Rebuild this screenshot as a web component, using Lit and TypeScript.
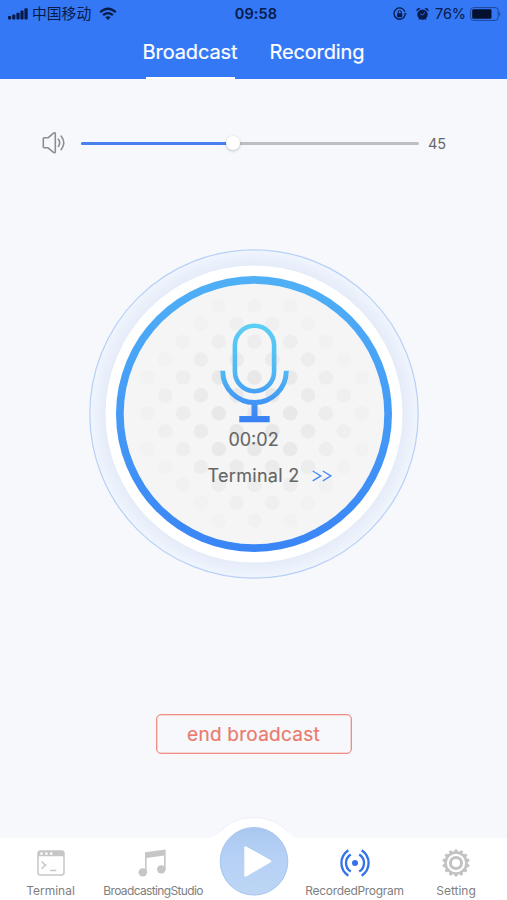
import { LitElement, html, css, svg } from "lit";
import { customElement, property } from "lit/decorators.js";

const signal = html`<svg width="20" height="12" viewBox="0 0 20 12" fill="#071a4a">
  <rect x="0" y="8" width="3.2" height="3.6" rx="1" /><rect x="4.2" y="6.4" width="3.2" height="5.2" rx="1" />
  <rect x="8.4" y="4.8" width="3.2" height="6.8" rx="1" /><rect x="12.4" y="2.6" width="3.2" height="9" rx="1" />
  <rect x="16.4" y="0.3" width="3.3" height="11.3" rx="1" /></svg>`;

const wifi = html`<svg width="18" height="14" viewBox="0 0 18 14" fill="none" stroke="#071a4a" stroke-width="2.3">
  <path d="M1.2 5.2Q9-1.8 16.8 5.2" /><path d="M4.1 8.2Q9 4 13.9 8.2" />
  <path d="M6.3 10.2Q9 8.1 11.7 10.2L9 12.9Z" fill="#071a4a" stroke="none" /></svg>`;

const rotationLock = html`<svg width="14" height="14" viewBox="0 0 14 14" fill="none" stroke="#071a4a">
  <path d="M12.1 7.8A5.6 5.6 0 1 1 11.9 4.7" stroke-width="1.3" /><path d="M10.7 6.2h3.2l-1.6 2.3z" fill="#071a4a" stroke="none" />
  <rect x="4.1" y="6.2" width="5.2" height="4" rx=".6" fill="#071a4a" stroke="none" />
  <path d="M5.2 6.5V5a1.5 1.5 0 0 1 3 0v1.5" stroke-width="1" /></svg>`;

const alarm = html`<svg width="13" height="14" viewBox="0 0 13 14">
  <g fill="#071a4a"><circle cx="6.5" cy="7.6" r="5.2" /><path d="M.6 4.4A2.6 2.6 0 0 1 4.5 1.4ZM12.4 4.4A2.6 2.6 0 0 0 8.5 1.4Z" /><path d="M2.2 13.2l1.6-2.6 1 1zM10.8 13.2l-1.6-2.6-1 1z" /></g>
  <path d="M6.8 8L9 5M6.8 8L4.2 7.1" stroke="#3478f6" stroke-width=".8" fill="none" /></svg>`;

const battery = html`<svg width="32" height="14" viewBox="0 0 32 14">
  <rect x=".6" y=".6" width="27.6" height="12.8" rx="3" fill="none" stroke="#1d4699" stroke-width="1" />
  <rect x="2.2" y="2.2" width="19.3" height="9.6" rx="1.4" fill="#04102f" /><path d="M29.3 4.7q2.4 2.3 0 4.6z" fill="#1d4699" /></svg>`;

const speaker = html`<svg width="24" height="24" viewBox="0 0 24 24" fill="none" stroke="#8b8d90" stroke-width="1.6" stroke-linejoin="round" stroke-linecap="round">
  <path d="M2.3 6.8H6L11.5 2.1Q13.3 1 13.3 3V20.6Q13.3 22.6 11.5 21.3L6 16.8H2.3Q1.3 16.8 1.3 15.8V7.8Q1.3 6.8 2.3 6.8Z" />
  <path d="M16.4 8.2Q19 11.7 16.4 15.4M19.2 5.2Q24.4 11.7 19.2 18.6" /></svg>`;

const microphone = html`<svg width="70" height="102" viewBox="0 0 70 102" fill="none">
  <defs><linearGradient id="tone" gradientUnits="userSpaceOnUse" x1="0" y1="0" x2="0" y2="100">
    <stop offset="0" stop-color="#5dd0f4" /><stop offset=".5" stop-color="#50b8f4" /><stop offset="1" stop-color="#397ff5" />
  </linearGradient></defs>
  <g stroke="url(#tone)"><rect x="14.9" y="3.8" width="39.2" height="65.4" rx="19.6" stroke-width="4.6" />
  <path d="M2.7 48.7A31.8 31.8 0 0 0 66.3 48.7" stroke-width="4.9" /></g>
  <path d="M31.5 80h6v14h12.2v6.2H19.3v-6.2h12.2z" fill="url(#tone)" /></svg>`;

const chevrons = html`<svg width="20" height="12" viewBox="0 0 20 12" fill="none" stroke="#4d8cf3" stroke-width="1.4">
  <path d="M.7 1L8.8 5.9.7 10.8M10.8 1l8.1 4.9-8.1 4.9" /></svg>`;

const terminalIcon = html`<svg width="28" height="26" viewBox="0 0 28 26" fill="none" stroke="#c6c6c6">
  <rect x="1" y="1" width="26" height="24" rx="2.4" stroke-width="1.5" />
  <path d="M1 3.2Q1 1 3.2 1H24.8Q27 1 27 3.2V6.3H1Z" fill="#c6c6c6" stroke="none" />
  <path d="M3.3 2.4h2.4v2.4h-2.4zM8.2 2.4h2.4v2.4H8.2zM13 2.4h2.4v2.4H13z" fill="#fff" stroke="none" />
  <path d="M4.8 11.3Q6.5 14.2 8.7 15.1Q6.5 16 4.8 18.9M13 20.6h6.3" stroke-width="1.5" /></svg>`;

const musicIcon = html`<svg width="28" height="28" viewBox="0 0 28 28" fill="#c6c6c6">
  <path d="M7 3.2L27.6.6V20.4H26V6.6L8.6 9V23H7Z" />
  <ellipse cx="4.8" cy="23.3" rx="4.3" ry="4.1" /><ellipse cx="23.3" cy="20.3" rx="4.3" ry="4.1" /></svg>`;

const broadcastIcon = html`<svg width="30" height="28" viewBox="0 0 30 28" fill="none" stroke="#3472e8" stroke-width="2.3">
  <circle cx="15" cy="14" r="3" fill="#3472e8" stroke="none" />
  <path d="M8.3 1.3Q1.4 6.2 1.4 14T8.3 26.7M21.7 1.3Q28.6 6.2 28.6 14T21.7 26.7M10.8 5.4Q6 8.4 6 14T10.8 22.6M19.2 5.4Q24 8.4 24 14T19.2 22.6" /></svg>`;

const gearIcon = html`<svg width="28" height="28" viewBox="0 0 28 28" fill="none" stroke="#c2c2c2">
  <circle cx="14" cy="14" r="10.5" stroke-width="2.6" /><circle cx="14" cy="14" r="5.6" stroke-width="3" />
  ${Array.from({ length: 14 }, (_, i) => svg`<path d="M12.2 3L12.7 .4h2.6l.5 2.6z" fill="#c2c2c2" stroke="none" transform="rotate(${(i * 360) / 14} 14 14)" />`)}</svg>`;

@customElement("status-bar")
class StatusBar extends LitElement {
  static styles = css`
    :host { display: grid; grid-template-columns: 1fr auto 1fr; height: 28px; align-items: center; color: #071a4a; padding: 0 5px 0 8px; font-size: 14.5px; }
    .side { display: flex; align-items: center; }
    .carrier { margin: -1px 8px 0 4px; font-size: 14.8px; line-height: 22px; }
    .time { font-weight: 600; font-size: 14.5px; letter-spacing: 0.1px; margin: -1px -2px 0 0; }
    .right { justify-content: flex-end; }
    .alarm { margin: 0 7px 0 9px; display: flex; }
    .percent { width: 31px; margin: -1px 4px 0 -1px; letter-spacing: -0.1px; }
    svg { display: block; }
  `;
  render() {
    return html`<div class="side">${signal}<span class="carrier">中国移动</span>${wifi}</div>
      <div class="time">09:58</div>
      <div class="side right">${rotationLock}<span class="alarm">${alarm}</span><span class="percent">76%</span>${battery}</div>`;
  }
}

@customElement("volume-slider")
class VolumeSlider extends LitElement {
  @property({ type: Number }) value = 45;
  static styles = css`
    :host { display: flex; align-items: center; height: 24px; padding: 0 59px 0 42px; color: #66686b; font-size: 14.5px; }
    svg { display: block; }
    .track { flex: 1; height: 3px; border-radius: 2px; background: #bdbec0; margin: 0 10px 0 15px; display: flex; align-items: center; }
    .fill { height: 100%; background: #4a80ee; border-radius: 2px; }
    .thumb { width: 14px; height: 14px; margin: 0 -7px; border-radius: 50%; background: #fff; box-shadow: 0 1px 3px rgba(60, 65, 75, 0.3); flex: none; }
    .value { width: 19px; letter-spacing: -0.2px; margin-top: 1px; margin-left: -1px; margin-right: 1px; }
  `;
  render() {
    return html`${speaker}
      <div class="track"><div class="fill" style="width:${this.value}%"></div><div class="thumb"></div></div>
      <span class="value">${this.value}</span>`;
  }
}

@customElement("broadcast-dial")
class BroadcastDial extends LitElement {
  static styles = css`
    :host { display: grid; width: 330px; height: 330px; }
    .dial, .content { grid-area: 1 / 1; }
    .dial { display: block; }
    .content { z-index: 1; display: flex; flex-direction: column; align-items: center; padding: 73px 0 0 1px; color: #666; font-size: 18px; -webkit-text-stroke: 0.15px #666; }
    .elapsed { line-height: 22px; margin-top: 5px; padding-right: 2px; }
    .target { display: flex; align-items: center; line-height: 22px; margin-top: 14px; gap: 12px; letter-spacing: 0.3px; padding-left: 31px; width: 125px; white-space: nowrap; }
    svg { display: block; flex: none; }
  `;
  private dots() {
    const out = [];
    for (let r = -6; r <= 6; r++) {
      for (let c = -6; c <= 6; c++) {
        if ((r + c) % 2 !== 0) continue;
        const x = c * 17.85, y = r * 17.9, d = Math.hypot(x, y);
        if (d > 119) continue;
        const shade = Math.min(1, Math.max(0.12, (128 - d) / 85));
        out.push(svg`<circle cx=${165.5 + x} cy=${164.3 + y} r="7.3" fill="#e8e8e8" fill-opacity=${shade} />`);
      }
    }
    return out;
  }
  render() {
    return html`<svg class="dial" width="330" height="330" viewBox="0 0 330 330">
        <defs>
          <linearGradient id="ring" x1="0" y1="0" x2="0" y2="1"><stop stop-color="#4fb0f6" /><stop offset="1" stop-color="#3a85f6" /></linearGradient>
          <radialGradient id="halo"><stop offset=".89" stop-color="#e3ebf8" /><stop offset="1" stop-color="#f0f5fd" /></radialGradient>
        </defs>
        <circle cx="165" cy="165" r="164.2" fill="url(#halo)" stroke="#b8d0f8" stroke-width="1.2" />
        <circle cx="165" cy="165" r="148.5" fill="#fff" />
        <circle cx="165" cy="165" r="138" fill="url(#ring)" />
        <circle cx="165" cy="165" r="130.3" fill="#f5f5f5" />
        ${this.dots()}
      </svg>
      <div class="content">${microphone}
        <div class="elapsed">00:02</div>
        <div class="target"><span>Terminal 2</span>${chevrons}</div>
      </div>`;
  }
}

@customElement("tab-bar")
class TabBar extends LitElement {
  static styles = css`
    :host { display: grid; grid-template-columns: 101px 104px 97px 105px 98px; height: 62px; background: #fff; color: #808080; font-size: 12px; }
    .tab { display: flex; flex-direction: column; align-items: center; padding-top: 11px; white-space: nowrap; }
    .icon { height: 28px; display: flex; align-items: center; }
    .music { padding-right: 2px; }
    .label { line-height: 16px; margin-top: 6px; }
    .studio { letter-spacing: -0.65px; }
    .program { letter-spacing: -0.3px; }
    .play { position: relative; top: -21px; display: block; }
    svg { display: block; }
  `;
  render() {
    return html`<div class="tab"><span class="icon">${terminalIcon}</span><span class="label">Terminal</span></div>
      <div class="tab"><span class="icon music">${musicIcon}</span><span class="label studio">BroadcastingStudio</span></div>
      <div class="play"><svg width="97" height="83" viewBox="0 0 97 83">
        <defs><linearGradient id="disc" x1="0" y1="0" x2="0" y2="1"><stop stop-color="#a9c7ef" /><stop offset=".4" stop-color="#b5d0f5" /><stop offset="1" stop-color="#bdd6f5" /></linearGradient></defs>
        <path d="M0 21.5Q11 20.5 16 14.5C23 5.5 35 .6 48.5.6S75 5.5 82 14.5Q87 20.5 97 21.5V83H0Z" fill="#fff" />
        <path d="M16 14.5C23 5.5 35 .6 48.5.6S75 5.5 82 14.5" fill="none" stroke="#e9ecf1" stroke-width=".8" />
        <circle cx="49" cy="44.3" r="33.8" fill="url(#disc)" stroke="#a8c5ef" stroke-width="1" />
        <path d="M39.3 30.5Q39.3 28.6 41.2 29.5L65.4 43Q67.4 44.3 65.4 45.5L41.2 59.4Q39.3 60.3 39.3 58.3Z" fill="#fff" />
      </svg></div>
      <div class="tab"><span class="icon">${broadcastIcon}</span><span class="label program">RecordedProgram</span></div>
      <div class="tab"><span class="icon">${gearIcon}</span><span class="label">Setting</span></div>`;
  }
}

@customElement("app-root")
class AppRoot extends LitElement {
  static styles = css`
    :host { display: flex; flex-direction: column; height: 900px; width: 507px; overflow: hidden; background: #f6f8fb; font-family: Inter, "Noto Sans CJK SC", sans-serif; }
    .top { height: 79px; background: #3478f6; flex: none; }
    .tabs { display: flex; height: 51px; justify-content: center; gap: 32px; color: #fff; font-size: 20px; letter-spacing: -0.12px; -webkit-text-stroke: 0.2px #fff; }
    .tab { display: flex; flex-direction: column; align-items: center; justify-content: space-between; line-height: 49px; }
    .bar { width: 89px; height: 2.5px; background: #fff; }
    .main { flex: 1; display: flex; flex-direction: column; align-items: center; }
    .volume { align-self: stretch; margin-top: 52px; }
    .dial { margin: 94px 0 0 1px; }
    .end { margin: 135px 0 0; width: 196px; height: 40px; box-sizing: border-box; border: 1px solid #ee8f85; box-shadow: inset 0 0 0 0.5px #f3b0a9; border-radius: 5px; background: transparent; color: #ea7a6e; font: inherit; font-size: 19px; letter-spacing: 0.25px; padding: 0; -webkit-text-stroke: 0.2px #ea7a6e; }
    .nav { flex: none; }
  `;
  render() {
    return html`<header class="top"><status-bar></status-bar>
        <nav class="tabs"><div class="tab">Broadcast<span class="bar"></span></div><div class="tab">Recording</div></nav>
      </header>
      <main class="main">
        <volume-slider class="volume" .value=${45}></volume-slider>
        <broadcast-dial class="dial"></broadcast-dial>
        <button class="end">end broadcast</button>
      </main>
      <tab-bar class="nav"></tab-bar>`;
  }
}
